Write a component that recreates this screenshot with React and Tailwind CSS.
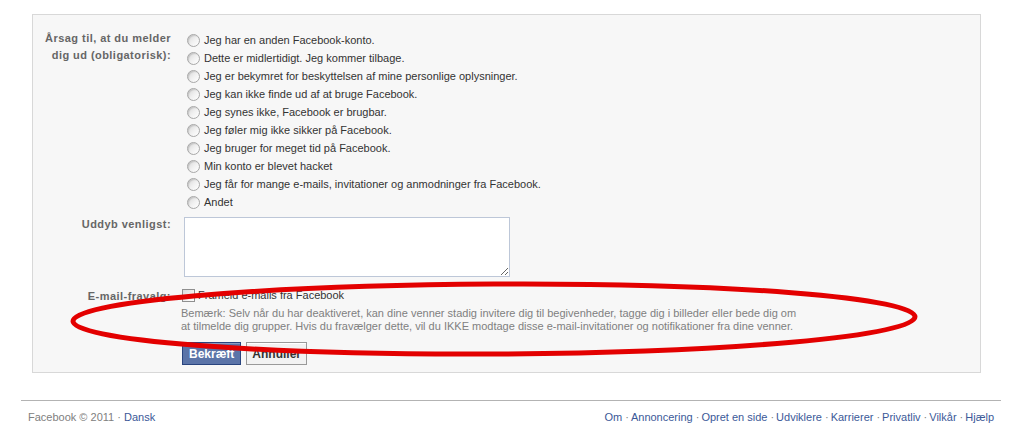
import React from 'react';

const reasons = [
  'Jeg har en anden Facebook-konto.',
  'Dette er midlertidigt. Jeg kommer tilbage.',
  'Jeg er bekymret for beskyttelsen af mine personlige oplysninger.',
  'Jeg kan ikke finde ud af at bruge Facebook.',
  'Jeg synes ikke, Facebook er brugbar.',
  'Jeg føler mig ikke sikker på Facebook.',
  'Jeg bruger for meget tid på Facebook.',
  'Min konto er blevet hacket',
  'Jeg får for mange e-mails, invitationer og anmodninger fra Facebook.',
  'Andet',
];

const links = ['Om', 'Annoncering', 'Opret en side', 'Udviklere', 'Karrierer', 'Privatliv', 'Vilkår', 'Hjælp'];

function Radio() {
  return (
    <span className="mr-[3px] ml-[3px] inline-block h-[13px] w-[13px] shrink-0 rounded-full border border-[#a8a8a8] bg-linear-to-br from-[#d6d6d6] via-[#f0f0f0] to-white shadow-[inset_1px_1px_1px_rgba(0,0,0,0.12)]" />
  );
}

export default function App() {
  return (
    <div className="relative h-[448px] w-[1022px] bg-white font-['Liberation_Sans',Arial,sans-serif] text-[11px] text-[#333]">
      {/* Form panel */}
      <div className="ml-[32px] mr-[41px] pt-[14px]">
        <div className="border border-[#d8d8d8] bg-[#f7f7f7] pt-[16px] pb-[7px]">
          <div className="grid grid-cols-[138px_1fr] gap-x-[13px]">
            <div className="-mt-[1px] text-right font-bold leading-[17px] tracking-[0.45px] text-[#666]">
              Årsag til, at du melder
              <br />
              dig ud (obligatorisk):
            </div>
            <div className="flex flex-col">
              {reasons.map((r) => (
                <label key={r} className="flex h-[18px] items-center gap-[1px] leading-[18px]">
                  <Radio />
                  <span>{r}</span>
                </label>
              ))}
            </div>

            <div className="mt-[6px] text-right font-bold leading-[14px] tracking-[0.45px] text-[#666]">Uddyb venligst:</div>
            <div className="mt-[6px]">
              <textarea className="block h-[60px] w-[326px] border border-[#bdc7d8] bg-white" />
            </div>

            <div className="mt-[11px] pt-[1px] text-right font-bold leading-[14px] tracking-[0.45px] text-[#666]">E-mail-fravalg:</div>
            <div className="mt-[11px] -ml-[2px]">
              <label className="flex items-center gap-[3px] leading-[14px]">
                <span className="inline-block h-[13px] w-[13px] border border-[#8f8f8f] bg-linear-to-br from-[#dcdcdc] to-white" />
                <span>Frameld e-mails fra Facebook</span>
              </label>
              <p className="mt-[5px] -ml-[1px] w-[625px] leading-[13px] text-[#808080]">
                Bemærk: Selv når du har deaktiveret, kan dine venner stadig invitere dig til begivenheder, tagge dig i billeder eller bede dig om at tilmelde dig grupper. Hvis du fravælger dette, vil du IKKE modtage disse e-mail-invitationer og notifikationer fra dine venner.
              </p>
              <div className="mt-[9px] flex gap-[5px]">
                <button className="h-[23px] border border-[#29447e] bg-[#5b74a8] px-[6px] text-[12px] font-bold text-white shadow-[inset_0_1px_0_#8a9cc2]">
                  Bekræft
                </button>
                <button className="h-[23px] border border-[#999] bg-[#f2f2f2] px-[5px] text-[12px] font-bold text-[#333] shadow-[inset_0_1px_0_#fff]">
                  Annuller
                </button>
              </div>
            </div>
          </div>
        </div>
      </div>

      {/* Footer */}
      <div className="mx-[21px] mt-[27px] flex justify-between border-t border-[#b3b3b3] px-[7px] pt-[9px] leading-[14px]">
        <div className="text-[#808080]">
          Facebook © 2011 · <span className="text-[#3b5998]">Dansk</span>
        </div>
        <div className="flex">
          {links.map((l, i) => (
            <span key={l} className="text-[#3b5998]">
              {i > 0 && <span className="pl-[3px] pr-[2px] text-[#808080]">·</span>}
              {l}
            </span>
          ))}
        </div>
      </div>

      {/* Red hand-drawn annotation */}
      <svg className="pointer-events-none absolute left-0 top-0" width="1022" height="448">
        <ellipse
          cx="494"
          cy="319"
          rx="421"
          ry="35"
          fill="none"
          stroke="#e30000"
          strokeWidth="5"
          transform="rotate(-0.3 494 319)"
        />
      </svg>
    </div>
  );
}
